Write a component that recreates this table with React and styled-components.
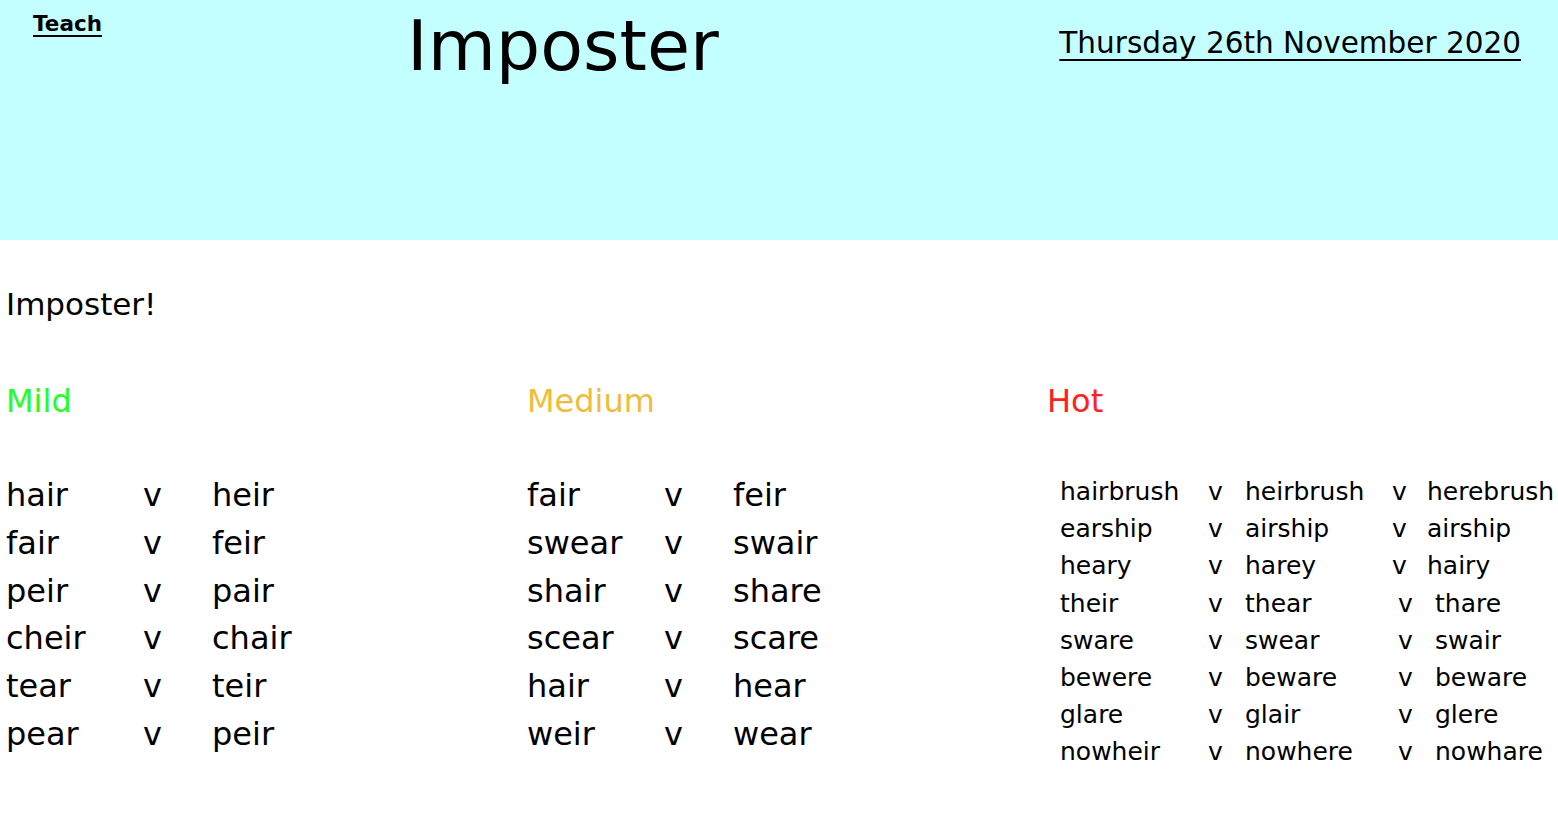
import React from 'react';
import styled, { createGlobalStyle } from 'styled-components';

const GlobalStyle = createGlobalStyle`
    body {
        margin: 0;
        background: #ffffff;
        font-family: "Comic Sans MS", "DejaVu Sans", sans-serif;
        color: #000000;
    }
`;

const levels = [
    {
        name: "Mild",
        color: "#22ff22",
        rows: [
            ["hair", "heir"],
            ["fair", "feir"],
            ["peir", "pair"],
            ["cheir", "chair"],
            ["tear", "teir"],
            ["pear", "peir"],
        ],
    },
    {
        name: "Medium",
        color: "#f0bc3c",
        rows: [
            ["fair", "feir"],
            ["swear", "swair"],
            ["shair", "share"],
            ["scear", "scare"],
            ["hair", "hear"],
            ["weir", "wear"],
        ],
    },
];

const hotRows = [
    ["hairbrush", "heirbrush", "herebrush"],
    ["earship", "airship", "airship"],
    ["heary", "harey", "hairy"],
    ["their", "thear", "thare"],
    ["sware", "swear", "swair"],
    ["bewere", "beware", "beware"],
    ["glare", "glair", "glere"],
    ["nowheir", "nowhere", "nowhare"],
];

export default function App(){
    return(
        <>
            <GlobalStyle />
            <Header>
                <Teach>Teach</Teach>
                <Title>Imposter</Title>
                <DateLine>Thursday 26th November 2020</DateLine>
            </Header>
            <Main>
                <Intro>Imposter!</Intro>
                <Levels>
                    {levels.map((level) => (
                        <Level key={level.name}>
                            <LevelName color={level.color}>{level.name}</LevelName>
                            <PairList>
                                {level.rows.map(([a, b], i) => (
                                    <PairRow key={i}>
                                        <span>{a}</span>
                                        <span>v</span>
                                        <span>{b}</span>
                                    </PairRow>
                                ))}
                            </PairList>
                        </Level>
                    ))}
                    <Level>
                        <LevelName color="#ff2020">Hot</LevelName>
                        <TripleList>
                            {hotRows.map(([a, b, c], i) => (
                                <TripleRow key={i} $shifted={i >= 3}>
                                    <span>{a}</span>
                                    <span>v</span>
                                    <span>{b}</span>
                                    <Vs $shifted={i >= 3}>v</Vs>
                                    <span>{c}</span>
                                </TripleRow>
                            ))}
                        </TripleList>
                    </Level>
                </Levels>
            </Main>
        </>
    );
}

const Header = styled.header`
    height: 240px;
    background-color: #c4ffff;
    display: grid;
    grid-template-columns: 407px 1fr auto;
    align-items: start;
    padding-right: 37px;
`;

const Teach = styled.div`
    padding-left: 33px;
    padding-top: 11px;
    font-size: 21.5px;
    font-weight: bold;
    text-decoration: underline;
    text-underline-offset: 4px;
`;

const Title = styled.h1`
    margin: 0;
    padding-top: 6px;
    font-size: 70px;
    font-weight: normal;
    line-height: 80px;
`;

const DateLine = styled.div`
    padding-top: 26px;
    font-size: 29.5px;
    text-decoration: underline;
    text-decoration-thickness: 2px;
    text-underline-offset: 6px;
`;

const Main = styled.main`
    padding: 0 6px;
`;

const Intro = styled.p`
    margin: 42px 0 0;
    font-size: 31px;
    line-height: 44px;
`;

const Levels = styled.div`
    display: grid;
    grid-template-columns: 521px 520px 1fr;
    margin-top: 53px;
`;

const Level = styled.section`
    display: flex;
    flex-direction: column;
`;

const LevelName = styled.h2`
    margin: 0;
    font-size: 32px;
    font-weight: normal;
    line-height: 44px;
    color: ${({ color }) => color};
`;

const PairList = styled.div`
    margin-top: 49px;
    display: flex;
    flex-direction: column;
`;

const PairRow = styled.div`
    display: grid;
    grid-template-columns: 137px 69px auto;
    font-size: 32px;
    line-height: 47.8px;
`;

const TripleList = styled.div`
    margin-top: 50px;
    padding-left: 13px;
    display: flex;
    flex-direction: column;
`;

const TripleRow = styled.div`
    display: grid;
    grid-template-columns: 148px 37px 147px ${({ $shifted }) => ($shifted ? "43px" : "35px")} auto;
    font-size: 25px;
    line-height: 37.2px;
    white-space: nowrap;
`;

const Vs = styled.span`
    padding-left: ${({ $shifted }) => ($shifted ? "6px" : "0")};
`;
